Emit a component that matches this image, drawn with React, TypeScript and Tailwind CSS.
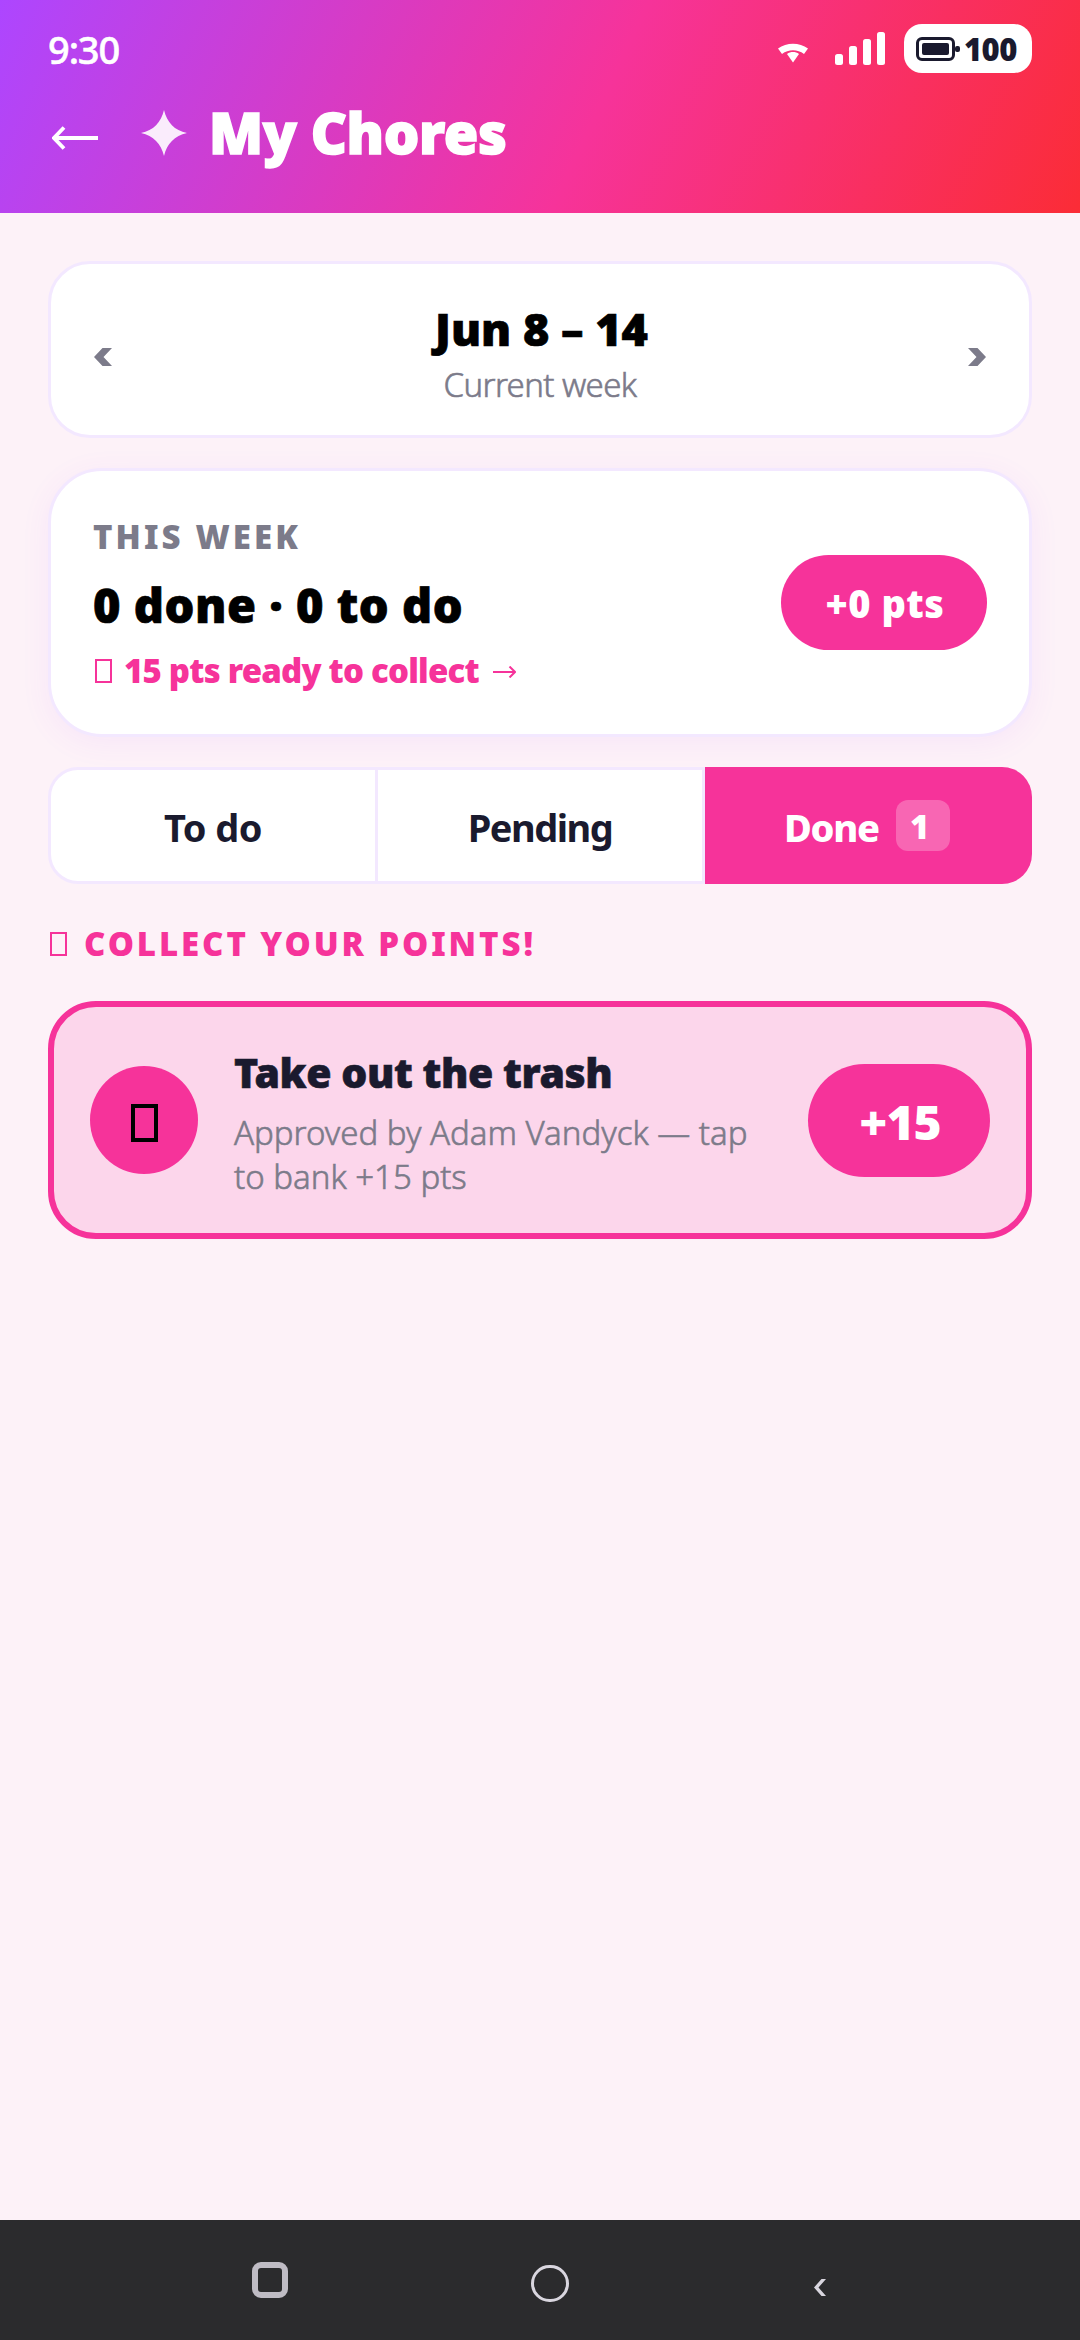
import React from "react";

function StatusBar() {
  return (
    <div className="flex h-[97px] items-center justify-between px-12">
      <span className="text-[38px] leading-[50px] font-medium tracking-[-1.1px] [-webkit-text-stroke:0.5px_white]">9:30</span>
      <div className="flex items-center">
        <svg className="mt-2 mr-[27px] h-5 w-[30px]" viewBox="0 0 30 20" fill="#fff">
          <path d="M0 5.500C8.500-1 21.500-1 30 5.500L26 11C19.500 6 10.500 6 4 11Z" />
          <path d="M9 11C12.500 8.400 17.500 8.400 21 11L15 19.500Z" />
        </svg>
        <div className="mr-[19px] flex h-[33px] items-end gap-[5.600px]">
          <i className="h-[11px] w-[8.400px] rounded-[2.500px] bg-white" />
          <i className="h-[19px] w-[8.400px] rounded-[2.500px] bg-white" />
          <i className="h-[26px] w-[8.400px] rounded-[2.500px] bg-white" />
          <i className="h-[33px] w-[8.400px] rounded-[2.500px] bg-white" />
        </div>
        <div className="flex h-[49px] w-32 items-center rounded-[18px] bg-white pl-3 text-[#1a1a2e]">
          <div className="h-6 w-[39px] rounded-[6px] border-3 border-[#1a1a2e] p-[3px]">
            <div className="h-full w-full rounded-[2px] bg-[#1a1a2e]" />
          </div>
          <div className="h-[6px] w-[5px] rounded-[2px] bg-[#1a1a2e]" />
          <span className="ml-1 text-[31px] leading-10 font-black tracking-[-0.6px]">100</span>
        </div>
      </div>
    </div>
  );
}

function Header() {
  return (
    <header className="h-[213px] bg-[linear-gradient(115deg,#ad46ff_0%,#f6339a_55%,#fb2c36_100%)] text-white">
      <StatusBar />
      <div className="flex h-[70px] items-center pl-[52px]">
        <svg className="mt-[11px] h-6 w-[46px]" viewBox="0 0 46 24">
          <path d="M12 1.500L2 12l10 10.500M2 12h44" fill="none" stroke="#fff" strokeWidth="3.800" />
        </svg>
        <svg className="mt-px ml-[43px] h-[46px] w-[46px]" viewBox="0 0 46 46" fill="#fff" fillOpacity="0.9">
          <path d="M23 0C26 12.500 33.500 20.500 46 23C33.500 26 26 33.500 23 46C20 33.500 12.500 26 0 23C12.500 20.500 20 12.500 23 0Z" />
        </svg>
        <h1 className="mb-px ml-[22px] text-[56px] leading-[70px] font-black tracking-[-0.4px] [-webkit-text-stroke:1.5px_white]">My Chores</h1>
      </div>
    </header>
  );
}

function WeekPicker() {
  return (
    <section className="flex h-[177px] items-start justify-between rounded-[42px] border-3 border-[#f3e8ff] bg-white px-[43px]">
      <svg className="mt-[84px] h-[18px] w-[18px]" viewBox="0 0 18 18" fill="#7c7b8a">
        <path d="M8.500 0H18L9.500 9L18 18H8.500L0 9Z" />
      </svg>
      <div className="flex flex-col items-center pt-[35px]">
        <div className="pl-[3px] text-[45px] leading-[60px] font-black text-black [-webkit-text-stroke:0.7px_black]">Jun 8 – 14</div>
        <div className="mt-1 text-[33px] leading-[44px] font-light tracking-[-0.6px] text-[#7c7b8a] [-webkit-text-stroke:0.6px_#7c7b8a]">Current week</div>
      </div>
      <svg className="mt-[84px] h-[18px] w-[18px]" viewBox="0 0 18 18" fill="#7c7b8a">
        <path d="M9.500 0H0L8.500 9L0 18H9.500L18 9Z" />
      </svg>
    </section>
  );
}

function Summary() {
  return (
    <section className="mt-[30px] flex h-[269px] items-start justify-between rounded-[54px] border-3 border-[#f3e8ff] bg-white px-[42px] shadow-[0_6px_30px_rgba(173,70,255,0.07)]">
      <div className="pt-11">
        <div className="text-[33px] leading-[44px] font-black tracking-[3.100px] text-[#7c7b8a]">THIS WEEK</div>
        <div className="mt-[15px] text-[47px] leading-[62px] font-black tracking-[0.5px] text-black [-webkit-text-stroke:0.7px_black]">0 done · 0 to do</div>
        <div className="mt-[13px] flex h-[44px] items-center text-[33px] leading-[44px] font-black tracking-[-0.8px] text-[#f6339a]">
          <span className="mr-3 ml-[2px] h-6 w-[17px] border-2 border-[#f6339a]" />
          <span>15 pts ready to collect</span>
          <svg className="mt-px ml-[14px] h-3 w-[23px]" viewBox="0 0 23 12" fill="none" stroke="#f6339a" strokeWidth="2">
            <path d="M0 6h22M16.500 0.500L22 6l-5.500 5.500" />
          </svg>
        </div>
      </div>
      <div className="mt-[84px] flex h-[95px] w-[206px] items-center justify-center rounded-full bg-[#f6339a] pt-[2px] pl-[2px] text-[38px] font-black tracking-[0.500px] text-white">
        +0 pts
      </div>
    </section>
  );
}

function Tabs() {
  return (
    <nav className="mt-[30px] flex h-[117px] text-[38px] leading-[50px]">
      <div className="flex w-[330px] items-center justify-center rounded-l-[30px] border-3 border-[#f3e8ff] bg-white pt-[2px] font-bold tracking-[-0.500px] text-[#1a1a2e]">To do</div>
      <div className="flex w-[327px] items-center justify-center border-y-3 border-r-3 border-[#f3e8ff] bg-white pt-[2px] font-bold tracking-[-1.500px] text-[#1a1a2e]">Pending</div>
      <div className="flex w-[327px] items-center rounded-r-[30px] bg-[#f6339a] pl-[79px] text-white">
        <span className="mt-[2px] w-[112px] font-extrabold tracking-[-1.300px]">Done</span>
        <span className="h-[51px] w-[54px] rounded-[12px] bg-white/25 pl-[14px] text-[33px] leading-[53px] font-black">1</span>
      </div>
    </nav>
  );
}

function CollectCard() {
  return (
    <section className="mt-[35px] flex h-[238px] items-start rounded-[48px] border-6 border-[#f6339a] bg-[#fcd6eb] px-9">
      <div className="mt-[59px] flex h-[108px] w-[108px] shrink-0 items-center justify-center rounded-full bg-[#f6339a]">
        <span className="mt-[6px] h-[38px] w-[27px] border-4 border-black" />
      </div>
      <div className="ml-9 grow pt-[37px]">
        <div className="text-[41px] leading-[56px] font-black tracking-[-0.45px] text-[#1a1a2e] [-webkit-text-stroke:0.6px_#1a1a2e]">Take out the trash</div>
        <p className="mt-[11px] text-[33px] leading-[44px] font-light text-[#7c7b8a] [-webkit-text-stroke:0.6px_#7c7b8a]">
          Approved by Adam Vandyck — tap
          <br />
          to bank +15 pts
        </p>
      </div>
      <div className="mt-[57px] flex h-[113px] w-[182px] shrink-0 items-center justify-center rounded-full bg-[#f6339a] pt-[2px] pl-[2px] text-[48px] font-black tracking-[-1px] text-white">
        +15
      </div>
    </section>
  );
}

function NavBar() {
  return (
    <footer className="flex h-[120px] items-start bg-[#2b2b2d] pl-[252px]">
      <div className="mt-[42px] h-9 w-9 rounded-[9px] border-6 border-[#bfbcc4]" />
      <div className="mt-[45px] ml-[243px] h-[37px] w-[38px] rounded-full border-3 border-[#d9d6df]" />
      <svg className="mt-[59px] ml-[245px] h-[17px] w-3" viewBox="0 0 12 17" fill="#d9d6df">
        <path d="M7.500 0H12L4.500 8.500L12 17H7.500L0 8.500Z" />
      </svg>
    </footer>
  );
}

export default function App() {
  return (
    <div className="flex h-[2340px] w-[1080px] flex-col overflow-hidden bg-[#fdf2f8] font-['Noto_Sans',sans-serif]">
      <Header />
      <main className="grow px-12 pt-12">
        <WeekPicker />
        <Summary />
        <Tabs />
        <div className="mt-[38px] flex h-[44px] items-center text-[33px] leading-[44px] font-black tracking-[2.900px] text-[#f6339a]">
          <span className="mr-[17px] ml-[2px] h-6 w-[17px] border-2 border-[#f6339a]" />
          COLLECT YOUR POINTS!
        </div>
        <CollectCard />
      </main>
      <NavBar />
    </div>
  );
}
